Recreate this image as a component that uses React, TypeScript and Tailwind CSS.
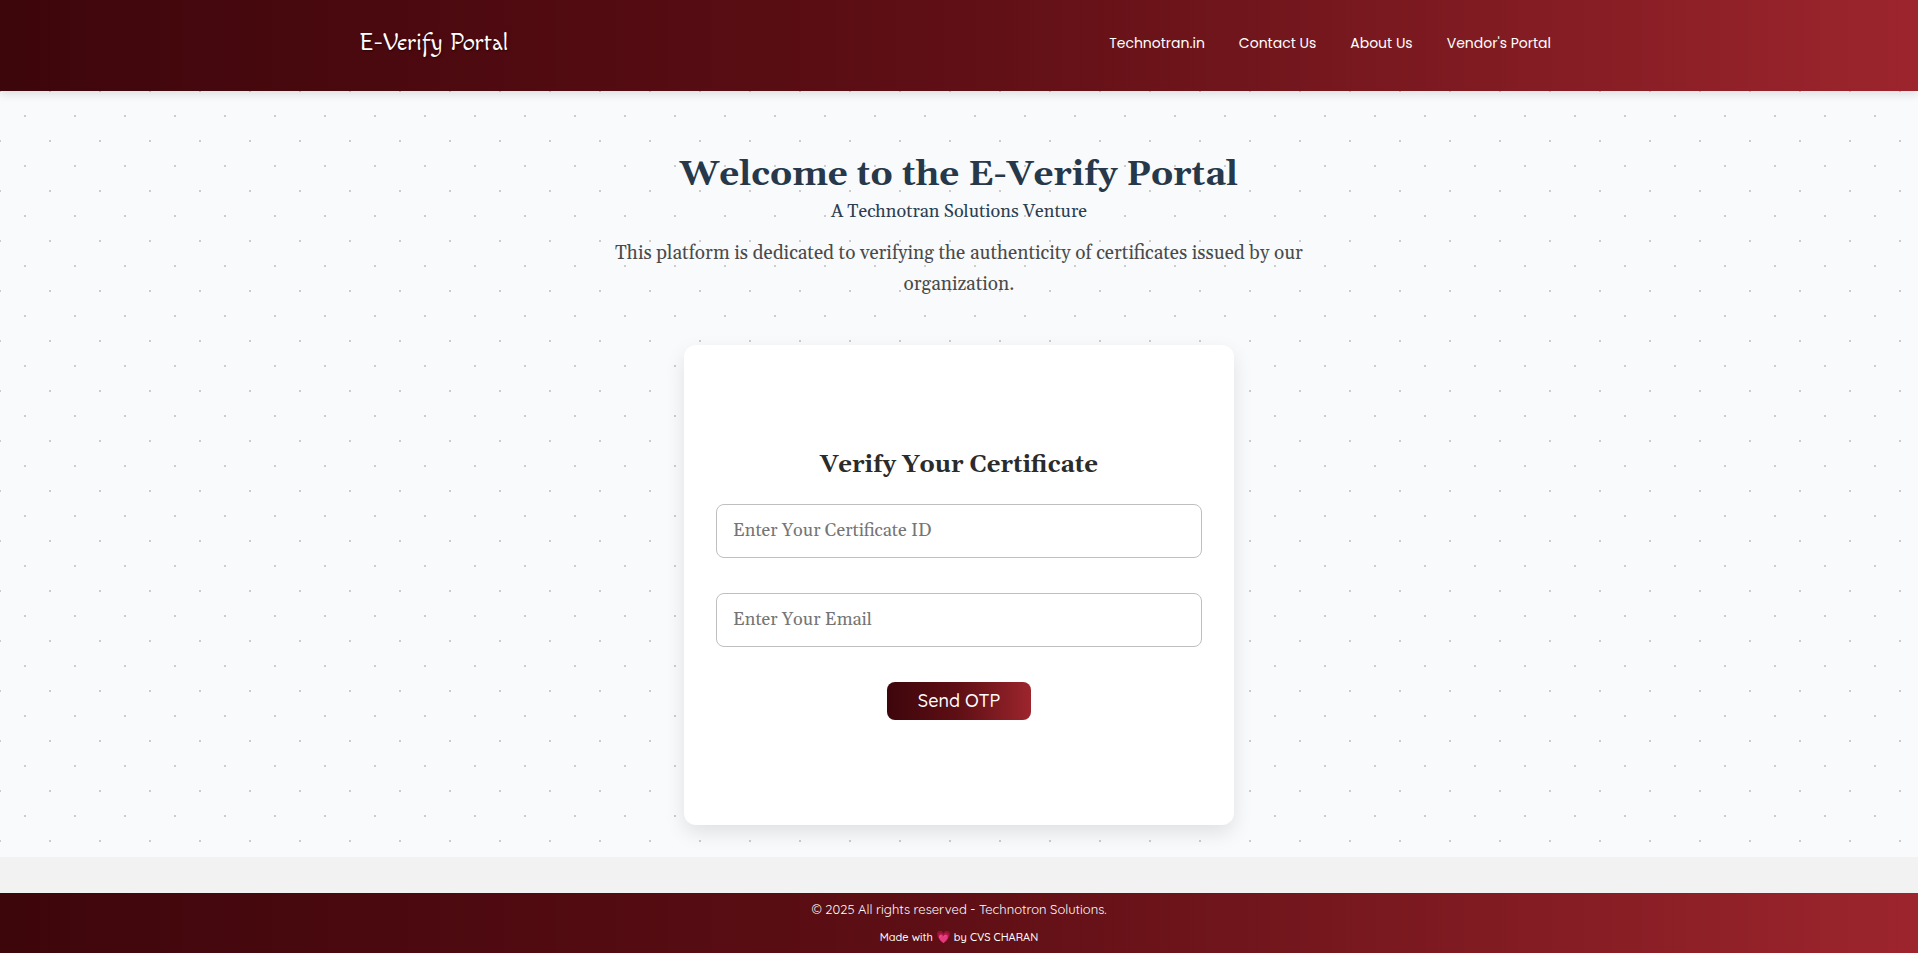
const links = ["Technotran.in", "Contact Us", "About Us", "Vendor's Portal"];

const serif = "font-[Gelasio,Georgia,'Liberation_Serif',serif]";
const field =
  "h-[54px] w-full rounded-lg border border-[#bfbfbf] bg-white px-4 text-lg text-[#2b2b2b] placeholder:text-[#757575] font-[Gelasio,Georgia,'Liberation_Serif',serif]";

export default function App() {
  return (
    <div className="flex min-h-screen flex-col bg-[#f2f2f2] font-[Quicksand,Lato,sans-serif]">
      <header className="relative bg-linear-to-r from-[#3d060b] via-[#5f0f15] to-[#9d252d] shadow-[0_4px_8px_rgba(0,0,0,0.1)]">
        <div className="mx-auto flex h-[91px] max-w-[1200px] items-start justify-between pt-[25px] pr-2">
          <a
            href="#home"
            className="text-2xl leading-9 font-medium text-white [text-shadow:1px_1px_2px_rgba(0,0,0,0.5)] font-[Macondo,Lato,sans-serif]"
          >
            E-Verify Portal
          </a>
          <nav className="flex gap-[34px]">
            {links.map((label) => (
              <a
                key={label}
                href="#"
                className="text-sm leading-9 text-white font-[Poppins,Inter,sans-serif]"
              >
                {label}
              </a>
            ))}
          </nav>
        </div>
      </header>

      <main className="mb-9 flex grow flex-col items-center bg-[#f8fafc] bg-[radial-gradient(#cccccc_1px,transparent_1px),radial-gradient(#cccccc_1px,transparent_1px)] bg-size-[50px_50px] [background-position:0_0,25px_25px] px-4 pt-[59px] pb-8">
        <div className={`max-w-[700px] text-center ${serif}`}>
          <h1 className="text-[35px] leading-[50px] font-bold text-[#263849]">
            Welcome to the E-Verify Portal
          </h1>
          <h2 className="-mt-0.5 text-lg leading-7 text-[#2c3e50]">
            A Technotran Solutions Venture
          </h2>
          <p className="mt-3 text-[19px] leading-[31px] text-[#4a4a4a]">
            This platform is dedicated to verifying the authenticity of
            certificates issued by our organization.
          </p>
        </div>

        <form
          onSubmit={(e) => e.preventDefault()}
          className="mt-[45px] flex h-[480px] w-full max-w-[550px] flex-col items-center justify-center rounded-xl bg-white px-8 pb-1 shadow-[0_8px_20px_rgba(0,0,0,0.1)]"
        >
          <h3
            className={`mb-[21px] text-2xl leading-9 font-bold text-[#2b2b2b] ${serif}`}
          >
            Verify Your Certificate
          </h3>
          <input
            type="text"
            aria-label="Certificate ID"
            placeholder="Enter Your Certificate ID"
            className={field}
          />
          <input
            type="email"
            aria-label="Email"
            placeholder="Enter Your Email"
            className={`mt-[35px] ${field}`}
          />
          <button
            type="submit"
            className="mt-[35px] h-[38px] w-36 rounded-lg bg-linear-to-r from-[#3d060b] via-[#5f0f15] to-[#9d252d] text-lg leading-6 font-medium text-white"
          >
            Send OTP
          </button>
        </form>
      </main>

      <footer className="flex h-[60px] flex-col items-center bg-linear-to-r from-[#3d060b] via-[#5f0f15] to-[#9d252d] pt-1 text-white">
        <p className="text-[13px] leading-6">
          © 2025 All rights reserved - Technotron Solutions.
        </p>
        <p className="mt-1 text-[11px] leading-6 font-medium">
          Made with <span className="text-xs">💗</span> by CVS CHARAN
        </p>
      </footer>
    </div>
  );
}
